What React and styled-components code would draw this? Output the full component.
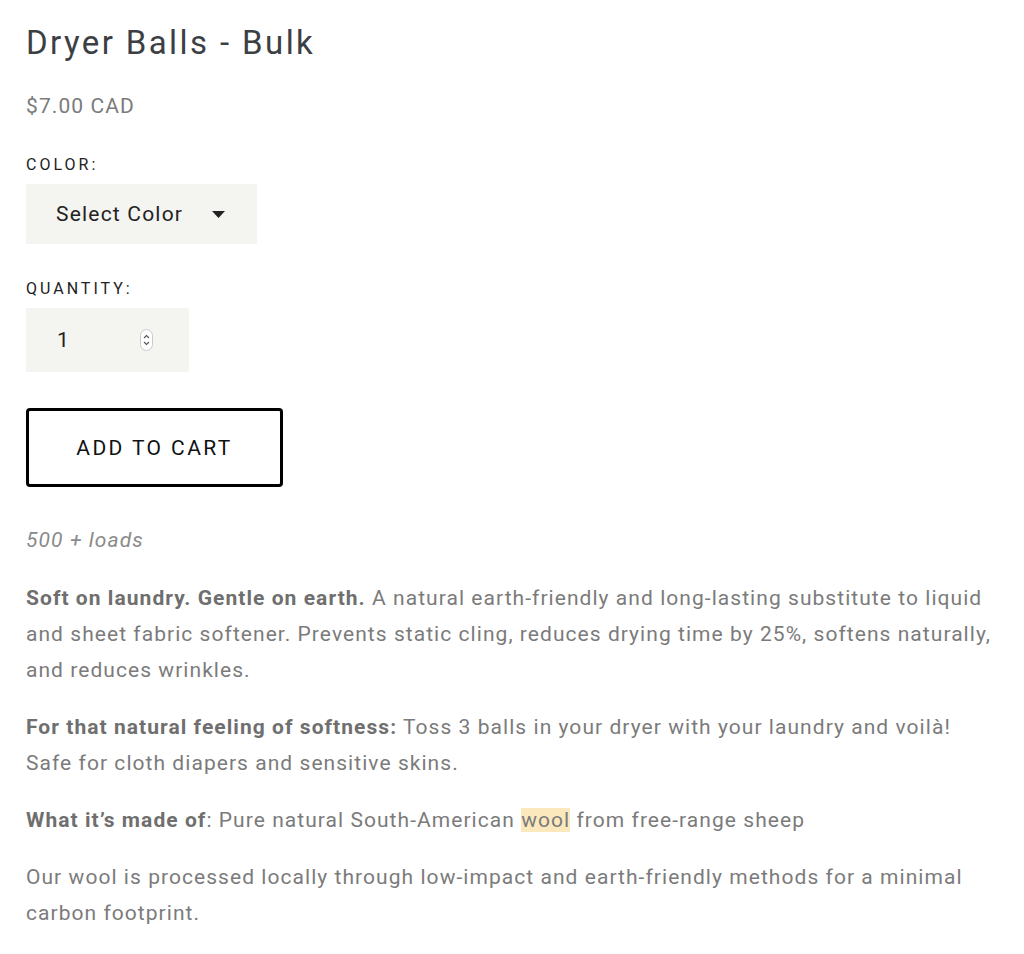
import React from "react";
import styled, { createGlobalStyle } from "styled-components";

const GlobalStyle = createGlobalStyle`
  html, body {
    margin: 0;
    padding: 0;
    background: #fff;
  }
  body {
    font-family: Roboto, "Liberation Sans", sans-serif;
  }
`;

export default function App() {
  return (
    <>
      <GlobalStyle />
      <Page>
        <Title>Dryer Balls - Bulk</Title>
        <Price>$7.00 CAD</Price>

        <Label>Color:</Label>
        <SelectBox>
          <span>Select Color</span>
          <svg width="13" height="7" viewBox="0 0 13 7">
            <path d="M0 0h13L6.5 7z" fill="#222" />
          </svg>
        </SelectBox>

        <Label>Quantity:</Label>
        <QtyBox>
          <QtyValue>1</QtyValue>
          <svg width="13" height="22" viewBox="0 0 13 22">
            <rect x="0.5" y="0.5" width="12" height="21" rx="6" fill="#fff" stroke="#c9c9c9" />
            <path d="M4 9l2.5-2.5L9 9" fill="none" stroke="#555" strokeWidth="1.1" />
            <path d="M4 13l2.5 2.5L9 13" fill="none" stroke="#555" strokeWidth="1.1" />
          </svg>
        </QtyBox>

        <CartButton>Add to cart</CartButton>

        <Loads>500 + loads</Loads>

        <Description>
          <p>
            <b>Soft on laundry. Gentle on earth.</b> A natural earth-friendly and long-lasting substitute to liquid
            and sheet fabric softener. Prevents static cling, reduces drying time by 25%, softens naturally, and
            reduces wrinkles.
          </p>
          <p>
            <b>For that natural feeling of softness:</b> Toss 3 balls in your dryer with your laundry and voilà!
            Safe for cloth diapers and sensitive skins.
          </p>
          <p>
            <b>What it’s made of</b>: Pure natural South-American <Mark>wool</Mark> from free-range sheep
          </p>
          <p>
            Our wool is processed locally through low-impact and earth-friendly methods for a minimal carbon
            footprint.
          </p>
        </Description>
      </Page>
    </>
  );
}

const Page = styled.div`
  width: 972px;
  padding: 22px 0 20px 26px;
`;

const Title = styled.h1`
  margin: 0;
  font-size: 33px;
  font-weight: 400;
  line-height: 42px;
  letter-spacing: 2.4px;
  color: #3c3f43;
`;

const Price = styled.div`
  margin-top: 28px;
  font-size: 21px;
  line-height: 28px;
  letter-spacing: 1.1px;
  color: #7b7b7b;
`;

const Label = styled.div`
  margin-top: 35px;
  font-size: 16px;
  line-height: 20px;
  letter-spacing: 3px;
  text-transform: uppercase;
  color: #222;
`;

const SelectBox = styled.div`
  margin-top: 9px;
  width: 231px;
  height: 60px;
  box-sizing: border-box;
  padding: 0 32px 0 30px;
  display: flex;
  align-items: center;
  justify-content: space-between;
  background: #f4f4f0;
  font-size: 21px;
  letter-spacing: 1.2px;
  color: #222;
`;

const QtyBox = styled.div`
  margin-top: 9px;
  width: 163px;
  height: 64px;
  box-sizing: border-box;
  padding: 0 0 0 31px;
  display: flex;
  align-items: center;
  background: #f4f4f0;
  font-size: 21px;
  color: #222;
`;

const QtyValue = styled.span`
  width: 83px;
`;

const CartButton = styled.button`
  display: block;
  margin-top: 36px;
  width: 257px;
  height: 79px;
  box-sizing: border-box;
  border: 3px solid #000;
  border-radius: 4px;
  background: #fff;
  font-family: Roboto, "Liberation Sans", sans-serif;
  font-size: 21px;
  letter-spacing: 2.4px;
  text-transform: uppercase;
  color: #111;
`;

const Loads = styled.p`
  margin: 39px 0 0;
  font-size: 21px;
  line-height: 28px;
  letter-spacing: 1.1px;
  font-style: italic;
  color: #8a8a8a;
`;

const Description = styled.div`
  margin-top: 26px;
  display: flex;
  flex-direction: column;
  gap: 21px;
  font-size: 21px;
  line-height: 36px;
  letter-spacing: 1.05px;
  color: #7b7b7b;

  p {
    margin: 0;
  }

  b {
    font-weight: 700;
    color: #6f6f6f;
  }
`;

const Mark = styled.span`
  background: #fbe8bd;
`;
